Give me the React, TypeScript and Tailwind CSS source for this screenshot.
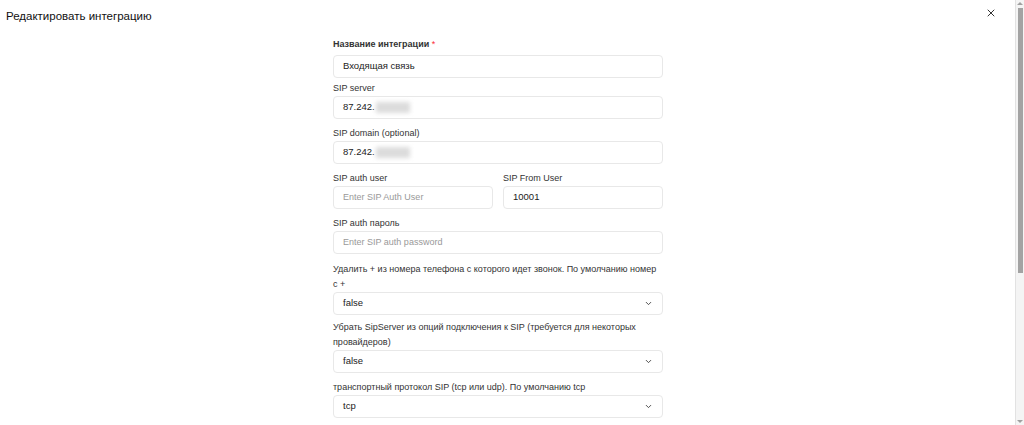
import { X, ChevronDown } from "lucide-react";

const font = { fontFamily: '"Liberation Sans", Arial, sans-serif' };

function Label({ children, required }: { children: React.ReactNode; required?: boolean }) {
  return (
    <div className={`text-[9px] leading-[15px] text-[#333] ${required ? "font-bold" : ""}`}>
      {children}
      {required && <span className="text-red-500 font-normal"> *</span>}
    </div>
  );
}

function TextInput({ value, placeholder, masked }: { value?: string; placeholder?: string; masked?: boolean }) {
  return (
    <div className="h-[23px] rounded-[4px] border border-[#e8e8e8] bg-white px-[9px] flex items-center">
      {value ? (
        <span className="text-[#222] text-[9.5px] flex items-center">
          {value}
          {masked && <span className="inline-block blur-[2px] bg-[#dcdcdc] ml-[1px] w-[34px] h-[11px]" />}
        </span>
      ) : (
        <span className="text-[#999] text-[9px]">{placeholder}</span>
      )}
    </div>
  );
}

function Select({ value }: { value: string }) {
  return (
    <div className="h-[23px] rounded-[4px] border border-[#e8e8e8] bg-white px-[9px] flex items-center justify-between text-[9.5px] text-[#222]">
      <span>{value}</span>
      <ChevronDown className="w-[9px] h-[9px] text-[#444]" strokeWidth={2.5} />
    </div>
  );
}

// page scrollbar drawn at the right edge
function Scrollbar() {
  return (
    <div className="w-[9px] shrink-0 bg-[#f4f4f4] border-l border-[#e2e2e2] flex flex-col items-center">
      <div className="mt-[2px] w-0 h-0 border-l-[3px] border-r-[3px] border-b-[3px] border-l-transparent border-r-transparent border-b-[#a0a0a0]" />
      <div className="mt-[3px] w-[5px] h-[265px] bg-[#a3a3a3]" />
      <div className="flex-1" />
      <div className="mb-[2px] w-0 h-0 border-l-[3px] border-r-[3px] border-t-[3px] border-l-transparent border-r-transparent border-t-[#a0a0a0]" />
    </div>
  );
}

export default function App() {
  return (
    <div className="flex h-[425px] overflow-hidden bg-white" style={font}>
      <div className="flex-1 min-w-0">
        <div className="flex items-center justify-between pl-[6px] pr-[18px] pt-[8px]">
          <h2 className="text-[11.5px] leading-[16px] text-[#111]">Редактировать интеграцию</h2>
          <X className="w-[12px] h-[12px] text-[#333] -mt-[6px]" strokeWidth={2} />
        </div>

        <div className="flex justify-center pr-[19px] pt-[13px] pb-[40px]">
          <div className="w-[330px]">
            <div className="mb-[3px]">
              <Label required>Название интеграции</Label>
              <div className="mt-[3px]">
                <TextInput value="Входящая связь" />
              </div>
            </div>

            <div className="mb-[7px]">
              <Label>SIP server</Label>
              <TextInput value="87.242." masked />
            </div>

            <div className="mb-[7px]">
              <Label>SIP domain (optional)</Label>
              <TextInput value="87.242." masked />
            </div>

            <div className="grid grid-cols-2 gap-[10px] mb-[7px]">
              <div>
                <Label>SIP auth user</Label>
                <TextInput placeholder="Enter SIP Auth User" />
              </div>
              <div>
                <Label>SIP From User</Label>
                <TextInput value="10001" />
              </div>
            </div>

            <div className="mb-[8px]">
              <Label>SIP auth пароль</Label>
              <TextInput placeholder="Enter SIP auth password" />
            </div>

            <div className="mb-[5px]">
              <Label>Удалить + из номера телефона с которого идет звонок. По умолчанию номер с +</Label>
              <Select value="false" />
            </div>

            <div className="mb-[7px]">
              <Label>Убрать SipServer из опций подключения к SIP (требуется для некоторых провайдеров)</Label>
              <Select value="false" />
            </div>

            <div className="mb-[7px]">
              <Label>транспортный протокол SIP (tcp или udp). По умолчанию tcp</Label>
              <Select value="tcp" />
            </div>
          </div>
        </div>
      </div>
      <Scrollbar />
    </div>
  );
}
